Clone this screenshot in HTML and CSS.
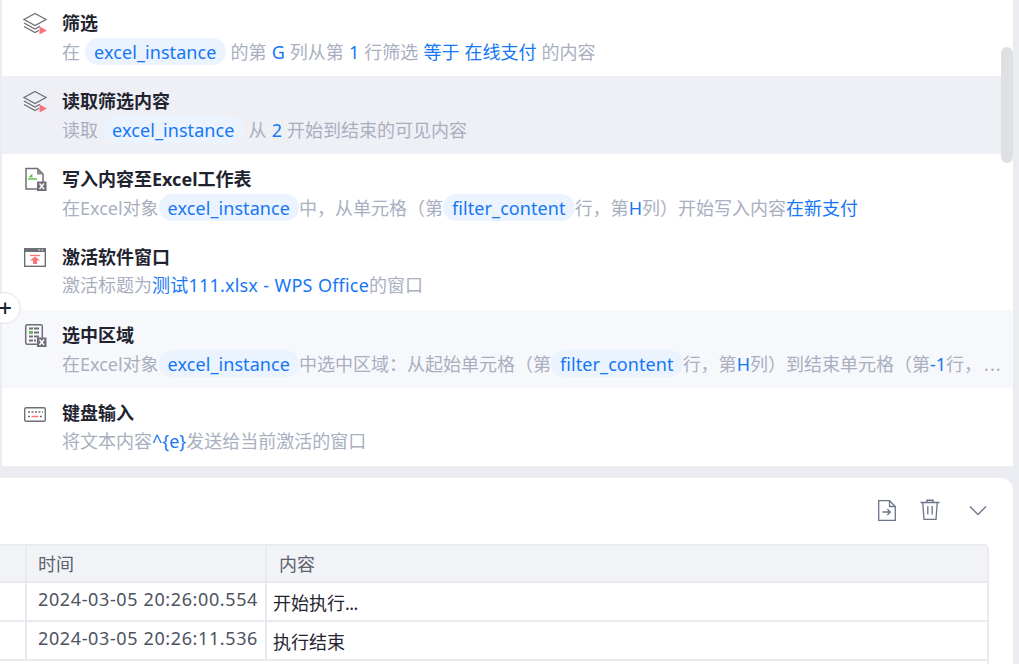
FILE: index.html
```html
<!DOCTYPE html>
<html lang="zh">
<head>
<meta charset="utf-8">
<title>流程</title>
<link rel="stylesheet" href="styles.css">
</head>
<body>
<div class="page">
  <section class="steps">
    <div class="list">
      <div class="row">
        <svg class="icon" viewBox="0 0 26 26"><g fill="none" stroke="#6f6f78" stroke-width="1.3"><path d="M13 2.500 24 8.500 13 14.500 2 8.500Z"/><path d="M2 12 13 18 18 15.300"/><path d="M2 15.500 13 21.500 17 19.300"/></g><path d="M17.500 15.500 25 19.500 17.500 23.500Z" fill="#f8747a"/></svg>
        <div class="body">
          <div class="title">筛选</div>
          <div class="desc">在 <span class="chip">excel_instance</span> 的第 <span class="val">G</span> 列从第 <span class="val">1</span> 行筛选 <span class="val">等于</span> <span class="val">在线支付</span> 的内容</div>
        </div>
      </div>
      <div class="row hover">
        <svg class="icon" viewBox="0 0 26 26"><g fill="none" stroke="#6f6f78" stroke-width="1.3"><path d="M13 2.500 24 8.500 13 14.500 2 8.500Z"/><path d="M2 12 13 18 18 15.300"/><path d="M2 15.500 13 21.500 17 19.300"/></g><path d="M17.500 15.500 25 19.500 17.500 23.500Z" fill="#f8747a"/></svg>
        <div class="body">
          <div class="title">读取筛选内容</div>
          <div class="desc">读取 <span class="chip">excel_instance</span> 从 <span class="val">2</span> 开始到结束的可见内容</div>
        </div>
      </div>
      <div class="row">
        <svg class="icon" viewBox="0 0 26 26"><path d="M4 1.500H15.500L21 7V22H4Z" fill="none" stroke="#6f6f78" stroke-width="1.500"/><path d="M15 1.500V7.500H21" fill="#8b8b93"/><path d="M7.500 10 10.500 7.500M7.500 9.800H10.500" stroke="#59c043" stroke-width="1.200" fill="none"/><path d="M6 12H15" stroke="#59c043" stroke-width="1.400"/><rect x="15" y="14.500" width="9.500" height="9.500" fill="#6f6f78"/><path d="M17.500 16.500 22 22M22 16.500 17.500 22" stroke="#fff" stroke-width="1.400"/></svg>
        <div class="body">
          <div class="title">写入内容至Excel工作表</div>
          <div class="desc">在Excel对象<span class="chip">excel_instance</span>中，从单元格（第<span class="chip">filter_content</span>行，第<span class="val">H</span>列）开始写入内容<span class="val">在新支付</span></div>
        </div>
      </div>
      <div class="row">
        <svg class="icon" viewBox="0 0 26 26"><rect x="2.700" y="3.700" width="20.600" height="17.600" fill="none" stroke="#6f6f78" stroke-width="1.400"/><rect x="2" y="3" width="22" height="4" fill="#6f6f78"/><path d="M16.500 5H18M19.500 5H21" stroke="#fff" stroke-width="1"/><path d="M8 10.500H18" stroke="#f8747a" stroke-width="1.300"/><path d="M13 11.500 18 15.500H15V19H11V15.500H8Z" fill="#f8747a"/></svg>
        <div class="body">
          <div class="title">激活软件窗口</div>
          <div class="desc">激活标题为<span class="val wide">测试111.xlsx - WPS Office</span>的窗口</div>
        </div>
      </div>
      <div class="row soft">
        <svg class="icon" viewBox="0 0 26 26"><rect x="3.700" y="1.700" width="16.600" height="19.600" rx="1.500" fill="none" stroke="#6f6f78" stroke-width="1.500"/><path d="M7 5.500H17M7 9.500H17M7 13.500H17M7 17.500H14" stroke="#6f6f78" stroke-width="2.200"/><path d="M11.500 4.500V19" stroke="#fff" stroke-width="1"/><path d="M7 9.500H11" stroke="#59c043" stroke-width="2.200"/><rect x="15" y="14.500" width="9.500" height="9.500" fill="#6f6f78"/><path d="M17.500 16.500 22 22M22 16.500 17.500 22" stroke="#fff" stroke-width="1.400"/></svg>
        <div class="body">
          <div class="title">选中区域</div>
          <div class="desc">在Excel对象<span class="chip">excel_instance</span>中选中区域：从起始单元格（第<span class="chip">filter_content</span>行，第<span class="val">H</span>列）到结束单元格（第<span class="val">-1</span>行，<span class="more">...</span></div>
        </div>
      </div>
      <div class="row">
        <svg class="icon" viewBox="0 0 26 26"><rect x="2.700" y="6.700" width="20.600" height="13.600" rx="1.500" fill="none" stroke="#6f6f78" stroke-width="1.400"/><path d="M6 11H8M9.500 11H11.500M13 11H15M16.500 11H18.500M20 11H21" stroke="#6f6f78" stroke-width="1.500"/><path d="M6 15.500H8M18 15.500H20" stroke="#6f6f78" stroke-width="1.500"/><path d="M9.500 15.500H16.500" stroke="#f8747a" stroke-width="1.500"/></svg>
        <div class="body">
          <div class="title">键盘输入</div>
          <div class="desc">将文本内容<span class="val">^{e}</span>发送给当前激活的窗口</div>
        </div>
      </div>
    </div>
    <div class="thumb"></div>
    <div class="add">+</div>
  </section>
  <section class="log">
    <div class="tools">
      <svg class="tool t-file" viewBox="0 0 20 23"><g fill="none" stroke="#6b7488" stroke-width="1.300"><path d="M1.700 1.700H12.500L18.300 7.500V21.300H1.700Z"/><path d="M12.500 1.700V7.500H18.300"/><path d="M5.500 13H13M10.300 10 13.300 13 10.300 16"/></g></svg>
      <svg class="tool t-trash" viewBox="0 0 20 22"><g fill="none" stroke="#6b7488" stroke-width="1.300"><path d="M.5 3.500H19.500"/><path d="M7 3V1.200H13V3" stroke-width="1.500"/><path d="M2.800 4 4 20.300H16L17.200 4"/><path d="M7.800 7V15.500M12.200 7V15.500"/></g></svg>
      <svg class="tool t-chev" viewBox="0 0 18 11"><path d="M1 1.500 9 9.500 17 1.500" fill="none" stroke="#6b7488" stroke-width="1.300"/></svg>
    </div>
    <div class="table">
      <div class="cell head"></div>
      <div class="cell head c-time">时间</div>
      <div class="cell head c-text">内容</div>
      <div class="cell"></div>
      <div class="cell time">2024-03-05 20:26:00.554</div>
      <div class="cell text">开始执行<span class="dots">...</span></div>
      <div class="cell"></div>
      <div class="cell time">2024-03-05 20:26:11.536</div>
      <div class="cell text">执行结束</div>
    </div>
  </section>
</div>
</body>
</html>
```
FILE: styles.css
```css
* { box-sizing: border-box; }
html, body { margin: 0; height: 100%; overflow: hidden; }
body {
  background: #ebecf1;
  font-family: "Noto Sans", "Noto Sans CJK SC", sans-serif;
  font-size: 18px;
}
.page { width: 1013px; height: 664px; display: flex; flex-direction: column; gap: 12px; }
.steps {
  position: relative;
  height: 466px;
  margin-left: 2px;
  background: #fff;
}
.list { display: flex; flex-direction: column; position: absolute; top: -2px; left: 0; right: 0; }
.row { display: flex; height: 78px; padding: 13px 12px 0 20px; gap: 14px; overflow: hidden; }
.hover { background: #eff0f5; }
.soft { background: #f7f8fc; }
.icon { width: 26px; height: 26px; flex: none; }
.body { flex: 1; min-width: 0; }
.title { font-weight: 700; color: #1f2430; height: 24px; line-height: 24px; }
.desc { margin-top: 3px; line-height: 27px; color: #a9afbf; white-space: nowrap; word-spacing: 0.4px; }
.val { color: #1677f5; }
.wide { letter-spacing: 0.2px; }
.chip { display: inline-block; color: #1677f5; background: #ebf3fe; border-radius: 14px; padding: 0 9px; height: 27px; line-height: 29px; letter-spacing: 0.08px; }
.more { letter-spacing: 1px; margin-left: 2px; }
.thumb { position: absolute; right: 0; top: 47px; width: 12px; height: 116px; border-radius: 6px; background: #dfe0e4; }
.add {
  position: absolute; left: -13px; top: 292px; width: 32px; height: 32px;
  border-radius: 50%; background: #fff; border: 1px solid #e4e5e9;
  color: #1f2430; font-size: 24px; font-weight: 500; line-height: 30px; text-align: center;
}
.log { flex: 1; min-height: 0; background: #fff; border-radius: 0 12px 0 0; overflow: hidden; }
.tools { height: 66px; padding: 21px 26px 0 0; display: flex; justify-content: flex-end; align-items: flex-start; }
.tool { display: block; flex: none; }
.t-file { width: 20px; height: 23px; margin-right: 23px; }
.t-trash { width: 20px; height: 22px; margin-right: 29px; }
.t-chev { width: 18px; height: 11px; margin-top: 6px; }
.table {
  width: 989px;
  display: grid;
  grid-template-columns: 27px 240px 1fr;
  grid-template-rows: 37px 39px 39px 39px;
  border-top: 2px solid #e8eaf0;
  border-right: 2px solid #e8eaf0;
  border-radius: 0 5px 0 0;
}
.cell { border-right: 2px solid #e8eaf0; border-bottom: 2px solid #e8eaf0; white-space: nowrap; overflow: hidden; }
.cell:nth-child(3n) { border-right: 0; }
.head { background: #f2f3f6; color: #5a6270; line-height: 36px; }
.c-time { padding-left: 11px; }
.c-text { padding-left: 12px; }
.time { color: #4c5360; padding-left: 11px; line-height: 32px; letter-spacing: 0.62px; }
.text { color: #1f2430; padding-left: 6px; line-height: 40px; }
.dots { letter-spacing: -0.6px; }
```
